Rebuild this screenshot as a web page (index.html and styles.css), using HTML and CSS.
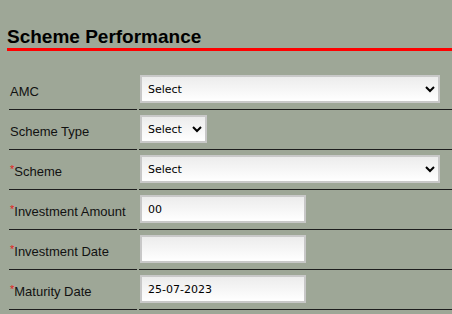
FILE: index.html
```html
<!DOCTYPE html>
<html lang="en">
<head>
    <meta charset="UTF-8">
    <title>Scheme Performance</title>
    <link rel="stylesheet" href="styles.css">
</head>
<body>
    <div class="page">
        <h2 class="section-title">Scheme Performance</h2>
        <table class="calc-form">
            <tr>
                <td class="label-cell">AMC</td>
                <td class="field-cell">
                    <select class="field-select wide"><option>Select</option></select>
                </td>
            </tr>
            <tr>
                <td class="label-cell">Scheme Type</td>
                <td class="field-cell">
                    <select class="field-select narrow"><option>Select</option></select>
                </td>
            </tr>
            <tr>
                <td class="label-cell"><span class="req">*</span>Scheme</td>
                <td class="field-cell">
                    <select class="field-select wide"><option>Select</option></select>
                </td>
            </tr>
            <tr>
                <td class="label-cell"><span class="req">*</span>Investment Amount</td>
                <td class="field-cell"><input type="text" class="field-input" value="00"></td>
            </tr>
            <tr>
                <td class="label-cell"><span class="req">*</span>Investment Date</td>
                <td class="field-cell"><input type="text" class="field-input" value=""></td>
            </tr>
            <tr>
                <td class="label-cell"><span class="req">*</span>Maturity Date</td>
                <td class="field-cell"><input type="text" class="field-input" value="25-07-2023"></td>
            </tr>
        </table>
    </div>
</body>
</html>
```

FILE: styles.css
```css
:root {
    --page-bg: #9ea797; --rule-red: #ff0000; --row-line: #1e1e1e;
    --text-color: #111111; --field-border: #c8c8c8;
}
html, body { margin: 0; padding: 0; }
body { background-color: var(--page-bg); color: var(--text-color); font-family: "Liberation Sans", Arial, sans-serif; overflow: hidden; }
.page { padding: 25px 0 0 7px; }
.section-title { margin: 0; font-size: 19px; line-height: 23px; font-weight: bold; color: #000; border-bottom: 3px solid var(--rule-red); }
.calc-form { margin-top: 19px; border-collapse: separate; border-spacing: 2px 0; width: 460px; }
.calc-form td { border-bottom: 1px solid var(--row-line); height: 39px; box-sizing: border-box; }
.label-cell { width: 128px; padding: 3px 0 0 1px; font-size: 13px; vertical-align: middle; white-space: nowrap; }
.field-cell { padding: 5px 0 6px 1px; vertical-align: top; }
.req { color: #e42020; font-size: 11px; vertical-align: top; position: relative; top: -1px; }
.field-select, .field-input { font-family: "DejaVu Sans", Verdana, sans-serif; font-size: 11px; color: #000; height: 28px; box-sizing: border-box; border: 2px solid var(--field-border); background: linear-gradient(#ececec, #ffffff); margin: 0; display: block; }
.field-select { padding: 0 0 0 2px; }
.field-select.wide { width: 300px; }
.field-select.narrow { width: 67px; }
.field-input { width: 166px; padding: 0 6px; outline: none; }
```
